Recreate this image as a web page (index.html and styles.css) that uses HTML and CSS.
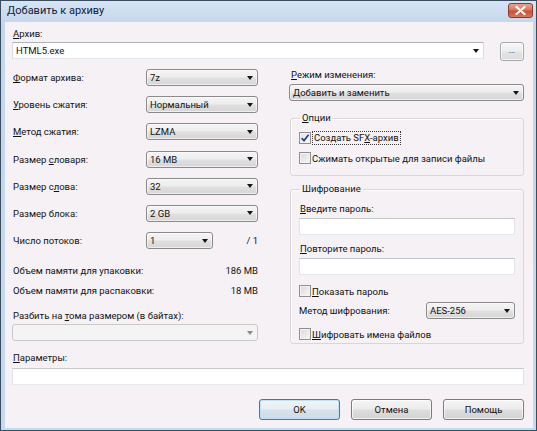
FILE: index.html
```html
<!DOCTYPE html>
<html lang="ru">
<head>
<meta charset="utf-8">
<title>Добавить к архиву</title>
<link rel="stylesheet" href="styles.css">
</head>
<body>
<div class="window">
  <div class="titlebar">
    <span class="title">Добавить к архиву</span>
    <span class="close"><svg width="11" height="9" viewBox="0 0 11 9"><path d="M1.5 1 L9.5 8 M9.5 1 L1.5 8" stroke="#fff" stroke-width="2.2" stroke-linecap="round"/></svg></span>
  </div>
  <div class="client">
    <div class="lbl"><u>А</u>рхив:</div>
    <div class="archive-row">
      <div class="edit-combo"><span class="val">HTML5.exe</span></div>
      <div class="btn dots">...</div>
    </div>
    <div class="main">
      <div class="left">
        <div class="rows">
          <div class="frow"><span class="flbl"><u>Ф</u>ормат архива:</span><div class="combo w112"><span class="val">7z</span></div></div>
          <div class="frow"><span class="flbl"><u>У</u>ровень сжатия:</span><div class="combo w112"><span class="val">Нормальный</span></div></div>
          <div class="frow"><span class="flbl"><u>М</u>етод сжатия:</span><div class="combo w112"><span class="val">LZMA</span></div></div>
          <div class="frow"><span class="flbl">Размер <u>с</u>ловаря:</span><div class="combo w112"><span class="val">16 MB</span></div></div>
          <div class="frow"><span class="flbl">Размер с<u>л</u>ова:</span><div class="combo w112"><span class="val">32</span></div></div>
          <div class="frow"><span class="flbl">Размер блока:</span><div class="combo w112"><span class="val">2 GB</span></div></div>
          <div class="frow"><span class="flbl">Число потоков:</span><div class="combo w67"><span class="val">1</span></div><span class="of">/ 1</span></div>
        </div>
        <div class="mem first"><span>Объем памяти для упаковки:</span><span>186 MB</span></div>
        <div class="mem"><span>Объем памяти для распаковки:</span><span>18 MB</span></div>
        <div class="lbl split-lbl">Разбить на <u>т</u>ома размером (в байтах):</div>
        <div class="combo disabled full"><span class="val"></span></div>
      </div>
      <div class="right">
        <div class="lbl mode-lbl"><u>Р</u>ежим изменения:</div>
        <div class="combo full mode"><span class="val">Добавить и заменить</span></div>
        <fieldset class="group options">
          <legend><u>О</u>пции</legend>
          <div class="chk first"><span class="box checked"><svg width="10" height="10" viewBox="0 0 10 10"><path d="M1.6 5.2 L4 7.6 L8.6 1.8" fill="none" stroke="#25418a" stroke-width="1.7"/></svg></span><span class="focus">Создать SF<u>X</u>-архив</span></div>
          <div class="chk second"><span class="box"></span><span>Сжимать открытые для записи файлы</span></div>
        </fieldset>
        <fieldset class="group enc">
          <legend>Шифрование</legend>
          <div class="lbl pw-lbl"><u>В</u>ведите пароль:</div>
          <div class="edit"></div>
          <div class="lbl pw-lbl2"><u>П</u>овторите пароль:</div>
          <div class="edit"></div>
          <div class="chk show"><span class="box"></span><span><u>П</u>оказать пароль</span></div>
          <div class="mrow"><span class="mlbl">Метод шифрования:</span><div class="combo w89"><span class="val">AES-256</span></div></div>
          <div class="chk names"><span class="box"></span><span><u>Ш</u>ифровать имена файлов</span></div>
        </fieldset>
      </div>
    </div>
    <div class="lbl params-lbl"><u>П</u>араметры:</div>
    <div class="edit params"></div>
    <div class="buttons">
      <div class="btn default">OK</div>
      <div class="btn">Отмена</div>
      <div class="btn">Помощь</div>
    </div>
  </div>
</div>
</body>
</html>
```

FILE: styles.css
```css
* { box-sizing: border-box; }
html, body { margin: 0; padding: 0; }
body {
  width: 537px;
  height: 431px;
  overflow: hidden;
  font-family: Roboto, "Liberation Sans", Arial, sans-serif;
  font-size: 9.5px;
  color: #111;
  background: #c5d7eb;
}
u { text-decoration: underline; text-underline-offset: 1px; }

.window {
  width: 537px;
  height: 431px;
  display: flex;
  flex-direction: column;
  background: linear-gradient(#d6e4f4, #c3d6ec 24px, #c7d9ed);
  border: 1px solid #3a4c5e;
  border-bottom-color: #2b5866;
  padding: 0 3px 2px 4px;
}

.titlebar {
  height: 21px;
  flex: none;
  display: flex;
  align-items: flex-start;
}
.title {
  padding-left: 2px;
  line-height: 20px;
  font-family: Roboto, "Liberation Sans", sans-serif;
  font-size: 11px;
  color: #10213a;
}
.close {
  margin-left: auto;
  margin-top: 2px;
  width: 25px;
  height: 15px;
  border: 1px solid #8a3a2c;
  border-radius: 3px;
  background: linear-gradient(#eaa492, #d97560 45%, #c94f37 55%, #d67a5a);
  display: flex;
  align-items: center;
  justify-content: center;
}

.client {
  flex: 1;
  background: #f5f1f5;
  padding: 5px 9px 0 7px;
  display: flex;
  flex-direction: column;
}

.lbl {
  height: 14px;
  line-height: 14px;
  padding-left: 1px;
  white-space: nowrap;
}

.archive-row {
  display: flex;
  align-items: flex-start;
  margin-top: 1px;
}
.edit-combo {
  width: 472px;
  height: 17px;
  background: #fff;
  border: 1px solid;
  border-color: #aeb1b8 #d9dde3 #e3e7ec #d9dde3;
  display: flex;
  align-items: center;
  padding-left: 3px;
}
.edit-combo::after,
.combo::after {
  content: "";
  margin-left: auto;
  margin-right: 4px;
  border-left: 3.5px solid transparent;
  border-right: 3.5px solid transparent;
  border-top: 4px solid #151515;
}
.val { white-space: nowrap; }

.btn {
  height: 21px;
  width: 81px;
  border: 1px solid #7b7b7b;
  border-radius: 3px;
  background: linear-gradient(#f4f4f4, #ececec 48%, #dedede 52%, #d2d2d2);
  box-shadow: inset 0 0 0 1px rgba(255,255,255,0.7);
  display: flex;
  align-items: center;
  justify-content: center;
}
.btn.default {
  border-color: #3d7bad;
  box-shadow: inset 0 0 0 1px #bfe2f5;
  background: linear-gradient(#f0f6fa, #e6eef4 48%, #d6e2eb 52%, #cfdbe5);
}
.dots {
  margin-left: auto;
  width: 24px;
  height: 19px;
  border-color: #a9a9a9;
  background: linear-gradient(#f6f6f6, #eeeeee 48%, #e4e4e4 52%, #dcdcdc);
  font-size: 8px;
  padding-bottom: 2px;
}

.main {
  display: flex;
  gap: 31px;
  margin-top: 8px;
}
.left { width: 246px; flex: none; }
.right { width: 235px; flex: none; }

.rows {
  display: flex;
  flex-direction: column;
  gap: 10.2px;
}
.frow {
  display: flex;
  align-items: center;
  height: 17px;
}
.flbl {
  width: 134px;
  flex: none;
  padding-left: 1px;
  white-space: nowrap;
}
.of { margin-left: auto; }

.combo {
  height: 17px;
  border: 1px solid #8a8a8a;
  border-radius: 3px;
  background: linear-gradient(#f4f4f4, #ededed 48%, #e0e0e0 52%, #d6d6d6);
  box-shadow: inset 0 0 0 1px rgba(255,255,255,0.6);
  display: flex;
  align-items: center;
  padding-left: 3px;
}
.w112 { width: 112px; }
.w67 { width: 67px; }
.w89 { width: 89px; flex: none; }
.full { width: 100%; }
.combo.disabled {
  border-color: #c9c9c9;
  background: #f4f4f4;
  box-shadow: none;
}
.combo.disabled::after { border-top-color: #8a8a8a; }

.mem {
  display: flex;
  justify-content: space-between;
  height: 20px;
  line-height: 20px;
  padding-left: 1px;
  white-space: nowrap;
}
.mem.first { margin-top: 12px; }
.split-lbl { margin-top: 8px; }
.split-lbl + .combo { margin-top: 1px; }

.mode-lbl { height: 12px; line-height: 12px; padding-left: 2px; }
.mode { margin-top: 3px; }

.group {
  margin: 0 0 0 1px;
  border: 1px solid #d9d5d9;
  border-radius: 3px;
  padding: 0 8px 0 8px;
  min-width: 0;
  box-shadow: inset 1px 1px 0 #fff;
}
.group legend {
  padding: 0 2px;
  margin-left: 1px;
  line-height: 14px;
  height: 14px;
}
.options { margin-top: 10px; padding-bottom: 9px; }
.enc { margin-top: 6px; padding-bottom: 1px; }

.chk {
  display: flex;
  align-items: center;
  height: 16px;
  gap: 1px;
  white-space: nowrap;
}
.options .first { margin-top: 5px; }
.options .second { margin-top: 4px; }
.box {
  width: 12px;
  height: 12px;
  flex: none;
  border: 1px solid #8f8f8f;
  background: linear-gradient(135deg, #d9d9d9, #f7f7f7);
  box-shadow: inset 0 0 0 1px #f4f4f4;
  display: flex;
  align-items: center;
  justify-content: center;
}
.box.checked { background: linear-gradient(135deg, #e4e4e4, #fbfbfb); }
.focus {
  border: 1px dotted #3a3a3a;
  padding: 0 1px;
  line-height: 12px;
}

.pw-lbl { margin-top: 6px; }
.pw-lbl2 { margin-top: 7px; }
.edit {
  height: 17px;
  background: #fff;
  border: 1px solid;
  border-color: #c4c7cd #e0e4e9 #e6e9ee #e0e4e9;
  margin-top: 2px;
}
.enc .show { margin-top: 8px; }
.mrow {
  display: flex;
  align-items: center;
  margin-top: 3px;
}
.mlbl { flex: 1; white-space: nowrap; }
.enc .names { margin-top: 7px; }

.params-lbl { margin-top: 7px; }
.edit.params { margin-top: 3px; }

.buttons {
  display: flex;
  justify-content: flex-end;
  gap: 11px;
  margin-top: 14px;
}
```
